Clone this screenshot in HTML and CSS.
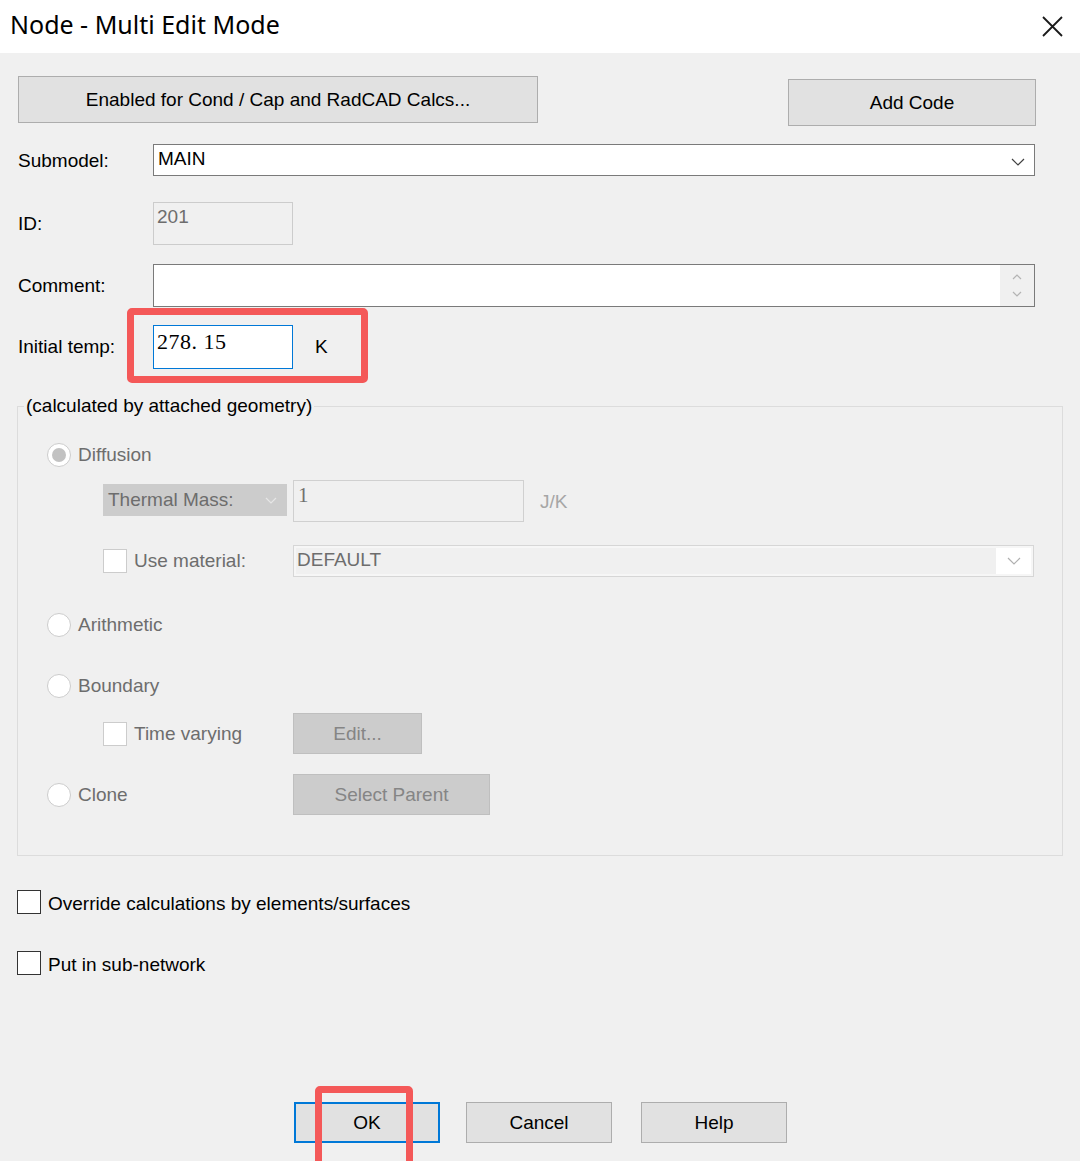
FILE: index.html
```html
<!DOCTYPE html>
<html lang="en">
<head>
<meta charset="utf-8">
<title>Node - Multi Edit Mode</title>
<link rel="stylesheet" href="styles.css">
</head>
<body>
<div class="dialog">
  <header class="titlebar">
    <h1 class="title">Node - Multi Edit Mode</h1>
    <button class="close" aria-label="Close">
      <svg width="21" height="21" viewBox="0 0 21 21"><path d="M1 1 L20 20 M20 1 L1 20" stroke="#1a1a1a" stroke-width="1.8" fill="none"/></svg>
    </button>
  </header>

  <main class="content">
    <div class="top-actions">
      <button class="btn btn-calcs">Enabled for Cond / Cap and RadCAD Calcs...</button>
      <button class="btn btn-code">Add Code</button>
    </div>

    <div class="field field-submodel">
      <span class="field-label">Submodel:</span>
      <div class="combo">
        <span class="combo-text">MAIN</span>
        <svg class="chev" width="14" height="8" viewBox="0 0 14 8"><path d="M1 1 L7 7 L13 1" stroke="#404040" stroke-width="1.2" fill="none"/></svg>
      </div>
    </div>

    <div class="field field-id">
      <span class="field-label">ID:</span>
      <div class="textbox textbox-short textbox-readonly">201</div>
    </div>

    <div class="field field-comment">
      <span class="field-label">Comment:</span>
      <div class="textbox textbox-comment">
        <div class="spin">
          <svg width="10" height="6" viewBox="0 0 10 6"><path d="M1 5 L5 1 L9 5" stroke="#b4b4b4" stroke-width="1.2" fill="none"/></svg>
          <svg width="10" height="6" viewBox="0 0 10 6"><path d="M1 1 L5 5 L9 1" stroke="#b4b4b4" stroke-width="1.2" fill="none"/></svg>
        </div>
      </div>
    </div>

    <div class="field field-temp">
      <span class="field-label">Initial temp:</span>
      <div class="textbox textbox-short textbox-focus">278. 15</div>
      <span class="unit">K</span>
      <span class="mark mark-temp"></span>
    </div>

    <fieldset class="group">
      <legend class="group-title">(calculated by attached geometry)</legend>

      <div class="opt opt-diffusion">
        <span class="radio radio-on"></span>
        <span class="opt-label">Diffusion</span>
      </div>

      <div class="sub sub-mass">
        <div class="combo-off">
          <span>Thermal Mass:</span>
          <svg width="12" height="7" viewBox="0 0 12 7"><path d="M1 1 L6 6 L11 1" stroke="#e6e6e6" stroke-width="1.2" fill="none"/></svg>
        </div>
        <div class="textbox textbox-mass">1</div>
        <span class="unit-off">J/K</span>
      </div>

      <div class="sub sub-material">
        <div class="check-cell">
          <span class="check check-off"></span>
          <span class="opt-label">Use material:</span>
        </div>
        <div class="combo-material">
          <span class="combo-text">DEFAULT</span>
          <span class="combo-drop">
            <svg width="14" height="8" viewBox="0 0 14 8"><path d="M1 1 L7 7 L13 1" stroke="#b0b0b0" stroke-width="1.2" fill="none"/></svg>
          </span>
        </div>
      </div>

      <div class="opt opt-arith">
        <span class="radio"></span>
        <span class="opt-label">Arithmetic</span>
      </div>

      <div class="opt opt-boundary">
        <span class="radio"></span>
        <span class="opt-label">Boundary</span>
      </div>

      <div class="sub sub-time">
        <div class="check-cell">
          <span class="check check-off"></span>
          <span class="opt-label">Time varying</span>
        </div>
        <button class="btn-off btn-edit" disabled>Edit...</button>
      </div>

      <div class="opt opt-clone">
        <div class="clone-cell">
          <span class="radio"></span>
          <span class="opt-label">Clone</span>
        </div>
        <button class="btn-off btn-parent" disabled>Select Parent</button>
      </div>
    </fieldset>

    <div class="toggle toggle-override">
      <span class="check"></span>
      <span>Override calculations by elements/surfaces</span>
    </div>

    <div class="toggle toggle-subnet">
      <span class="check"></span>
      <span>Put in sub-network</span>
    </div>

    <div class="footer">
      <button class="btn btn-foot btn-default">OK<span class="mark mark-ok"></span></button>
      <button class="btn btn-foot btn-cancel">Cancel</button>
      <button class="btn btn-foot btn-help">Help</button>
    </div>
  </main>
</div>
</body>
</html>
```

FILE: styles.css
```css
* {
  box-sizing: border-box;
}

html, body {
  margin: 0;
  padding: 0;
}

body {
  width: 1080px;
  height: 1161px;
  overflow: hidden;
  background: #f0f0f0;
  font-family: "Liberation Sans", Arial, sans-serif;
  font-size: 19px;
  color: #000;
}

button {
  font-family: inherit;
  font-size: inherit;
  color: inherit;
  margin: 0;
  padding: 0;
}

/* ---------- title bar ---------- */
.titlebar {
  height: 53px;
  background: #fff;
  display: flex;
  align-items: center;
  justify-content: space-between;
  padding: 0 17px 5px 10px;
}

.title {
  margin: 0;
  font-family: "Noto Sans", "Open Sans", sans-serif;
  font-size: 25px;
  font-weight: 400;
  color: #000;
  letter-spacing: 0;
}

.close {
  border: 0;
  background: transparent;
  width: 21px;
  height: 21px;
  display: flex;
  margin-top: 5px;
}

/* ---------- body ---------- */
.content {
  padding: 0 17px 0 18px;
}

.btn {
  background: #e1e1e1;
  border: 1px solid #adadad;
  display: flex;
  align-items: center;
  justify-content: center;
  position: relative;
}

.top-actions {
  display: flex;
  align-items: flex-start;
  justify-content: space-between;
  padding-top: 23px;
  padding-right: 27px;
}

.btn-calcs {
  width: 520px;
  height: 47px;
}

.btn-code {
  width: 248px;
  height: 47px;
  margin-top: 3px;
}

.field {
  display: flex;
  align-items: center;
  position: relative;
  padding-right: 28px;
}

.field-label {
  width: 135px;
  flex: none;
}

.field-submodel {
  margin-top: 18px;
}

.field-submodel .field-label {
  margin-top: 2px;
}

.field-id {
  margin-top: 26px;
}

.field-comment {
  margin-top: 19px;
}

.field-temp {
  margin-top: 18px;
}

.combo {
  flex: 1;
  height: 32px;
  background: #fff;
  border: 1px solid #7a7a7a;
  display: flex;
  align-items: flex-start;
  justify-content: space-between;
  padding: 3px 9px 0 4px;
}

.combo .chev {
  margin-top: 10px;
}

.textbox {
  height: 43px;
  background: #fff;
  border: 1px solid #7a7a7a;
  padding: 3px 3px 0 3px;
}

.textbox-short {
  width: 140px;
}

.textbox-readonly {
  background: #f0f0f0;
  border-color: #cccccc;
  color: #6d6d6d;
}

.textbox-comment {
  flex: 1;
  display: flex;
  justify-content: flex-end;
  padding: 0;
}

.spin {
  width: 34px;
  background: #f0f0f0;
  display: flex;
  flex-direction: column;
  align-items: center;
  justify-content: center;
  gap: 11px;
}

.textbox-focus {
  height: 44px;
  border-color: #0078d7;
  font-family: "Liberation Serif", "Times New Roman", serif;
  font-size: 22px;
  padding: 3px 3px 0;
  letter-spacing: 0.5px;
}

.unit {
  margin-left: 22px;
}

/* red callout frames */
.mark {
  position: absolute;
  border: 7px solid #f45858;
  border-radius: 5px;
  pointer-events: none;
}

.mark-temp {
  left: 109px;
  top: -17px;
  width: 241px;
  height: 75px;
}

.mark-ok {
  left: 19px;
  top: -18px;
  width: 98px;
  height: 90px;
}

/* ---------- group box ---------- */
.group {
  margin: 26px 0 0 -1px;
  padding: 0 28px 40px 0;
  border: 1px solid #dcdcdc;
  min-width: 0;
}

.group-title {
  line-height: 22px;
  padding: 0 2px;
  margin-left: 6px;
  color: #000;
}

.opt {
  display: flex;
  align-items: center;
  padding-left: 29px;
  color: #6d6d6d;
}

.opt-label {
  margin-left: 7px;
}

.radio {
  width: 24px;
  height: 24px;
  border-radius: 50%;
  background: #fff;
  border: 1px solid #cccccc;
  flex: none;
  display: flex;
  align-items: center;
  justify-content: center;
}

.radio-on::after {
  content: "";
  width: 14px;
  height: 14px;
  border-radius: 50%;
  background: #c2c2c2;
}

.opt-diffusion {
  margin-top: 26px;
  height: 24px;
}

.opt-arith {
  margin-top: 36px;
  height: 24px;
}

.opt-boundary {
  margin-top: 37px;
  height: 24px;
}

.opt-clone {
  margin-top: 20px;
  height: 41px;
}

.clone-cell {
  width: 246px;
  display: flex;
  align-items: center;
}

.sub {
  display: flex;
  align-items: center;
  padding-left: 85px;
  color: #6d6d6d;
}

.sub-mass {
  margin-top: 13px;
  height: 42px;
}

.combo-off {
  width: 184px;
  height: 32px;
  background: #cccccc;
  display: flex;
  align-items: center;
  justify-content: space-between;
  padding: 0 10px 0 5px;
  margin-top: -3px;
}

.combo-off svg {
  margin-top: 2px;
}

.textbox-mass {
  width: 231px;
  height: 42px;
  margin-left: 6px;
  background: #f0f0f0;
  border-color: #d0d0d0;
  color: #707070;
  font-family: "Liberation Serif", "Times New Roman", serif;
  font-size: 21px;
  padding: 2px 4px 0;
}

.unit-off {
  margin-left: 16px;
  color: #a6a6a6;
  margin-top: 2px;
}

.sub-material {
  margin-top: 23px;
  height: 32px;
}

.check-cell {
  width: 190px;
  display: flex;
  align-items: center;
  flex: none;
}

.check {
  width: 24px;
  height: 24px;
  background: #fff;
  border: 1px solid #333;
  flex: none;
}

.check-off {
  border-color: #cccccc;
}

.combo-material {
  flex: 1;
  height: 32px;
  border: 1px solid #d6d6d6;
  background: #f0f0f0;
  box-shadow: inset 0 0 0 2px #f6f6f6;
  display: flex;
  justify-content: space-between;
  padding: 0 0 0 3px;
}

.combo-material .combo-text {
  margin-top: 3px;
  color: #6d6d6d;
}

.combo-drop {
  width: 35px;
  margin: 2px 2px 2px 0;
  background: #fff;
  display: flex;
  align-items: center;
  justify-content: center;
}

.sub-time {
  margin-top: 15px;
  height: 41px;
}

.btn-off {
  height: 41px;
  background: #cccccc;
  border: 1px solid #bfbfbf;
  color: #858585;
}

.btn-edit {
  width: 129px;
}

.btn-parent {
  width: 197px;
}

/* ---------- toggles ---------- */
.toggle {
  display: flex;
  align-items: center;
  height: 24px;
  gap: 7px;
}

.toggle span:last-child {
  margin-top: 3px;
}

.toggle .check {
  margin-left: -1px;
}

.toggle-override {
  margin-top: 34px;
}

.toggle-subnet {
  margin-top: 37px;
}

/* ---------- footer ---------- */
.footer {
  display: flex;
  margin-top: 127px;
  padding-left: 276px;
}

.btn-foot {
  width: 146px;
  height: 41px;
}

.btn-cancel {
  margin-left: 26px;
}

.btn-help {
  margin-left: 29px;
}

.btn-default {
  border: 2px solid #0078d7;
}
```
